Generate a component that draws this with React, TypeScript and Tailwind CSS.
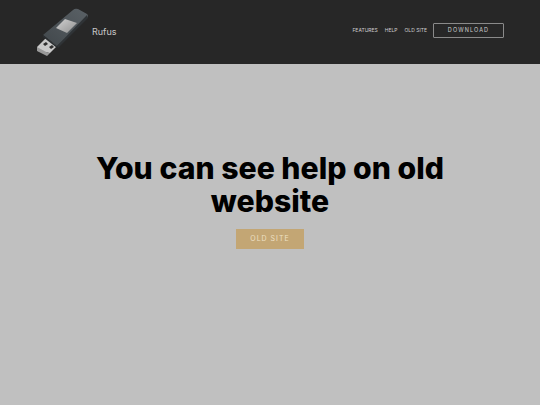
const font = { fontFamily: "Inter, sans-serif" };

function UsbLogo() {
  return (
    <svg width="54" height="50" viewBox="36 7 54 50">
      <defs>
        <linearGradient id="body" x1="0" y1="1" x2="1" y2="0">
          <stop offset="0" stopColor="#41474b" />
          <stop offset="1" stopColor="#5a6166" />
        </linearGradient>
        <linearGradient id="slider" x1="0" y1="0" x2="1" y2="1">
          <stop offset="0" stopColor="#d2d2d2" />
          <stop offset="1" stopColor="#8f8f8f" />
        </linearGradient>
      </defs>
      {/* metal plug */}
      <path d="M37 47 L46 38 L57 46 L50 53 L38 51 Z" fill="#c9c9c9" />
      <path d="M37 47 L48 53 L50 53 L47 56 L37 51 Z" fill="#9a9a9a" />
      <path d="M43 44 L46 42 L48 44 L45 46 Z M49 47 L52 45 L54 47 L51 49 Z" fill="#2f2f2f" />
      {/* body */}
      <path d="M43 35 L73 10 Q75 8 78 9 L87 14 Q89 16 87 18 L57 46 Z" fill="url(#body)" />
      <path d="M43 35 L57 46 L57 48 L43 37 Z" fill="#2a2e31" />
      <path d="M87 15 L88 18 L58 48 L57 46 Z" fill="#2f3336" />
      {/* slider */}
      <path d="M56 28 L65 19 L77 23 L67 33 Z" fill="url(#slider)" />
    </svg>
  );
}

export default function App() {
  return (
    <div className="flex h-[405px] w-[540px] flex-col overflow-hidden bg-[#c0c0c0]" style={font}>
      <header className="flex h-[64px] items-center justify-between bg-[#272727] pl-[36px] pr-[36px]">
        <div className="flex items-center gap-[2px]">
          <UsbLogo />
          <span className="mb-[1px] text-[9px] text-[#c8c8c8]">Rufus</span>
        </div>
        <nav className="mb-[3px] flex items-center gap-[7px] text-[5px] text-[#cfcfcf]">
          <span>FEATURES</span>
          <span>HELP</span>
          <span>OLD SITE</span>
          <span className="-ml-[1px] flex h-[15px] w-[71px] items-center justify-center rounded-[1px] border border-[#8a8a8a] text-[5.5px] tracking-[1.1px]">
            DOWNLOAD
          </span>
        </nav>
      </header>
      <main className="flex flex-col items-center pt-[88px]">
        <h1 className="w-[400px] text-center text-[30.2px] leading-[33px] font-extrabold text-black">
          You can see help on old website
        </h1>
        <span className="mt-[11px] flex h-[20px] w-[68px] items-center justify-center bg-[#c3a674] text-[7px] tracking-[1px] text-[#eee0c4]">
          OLD SITE
        </span>
      </main>
    </div>
  );
}
